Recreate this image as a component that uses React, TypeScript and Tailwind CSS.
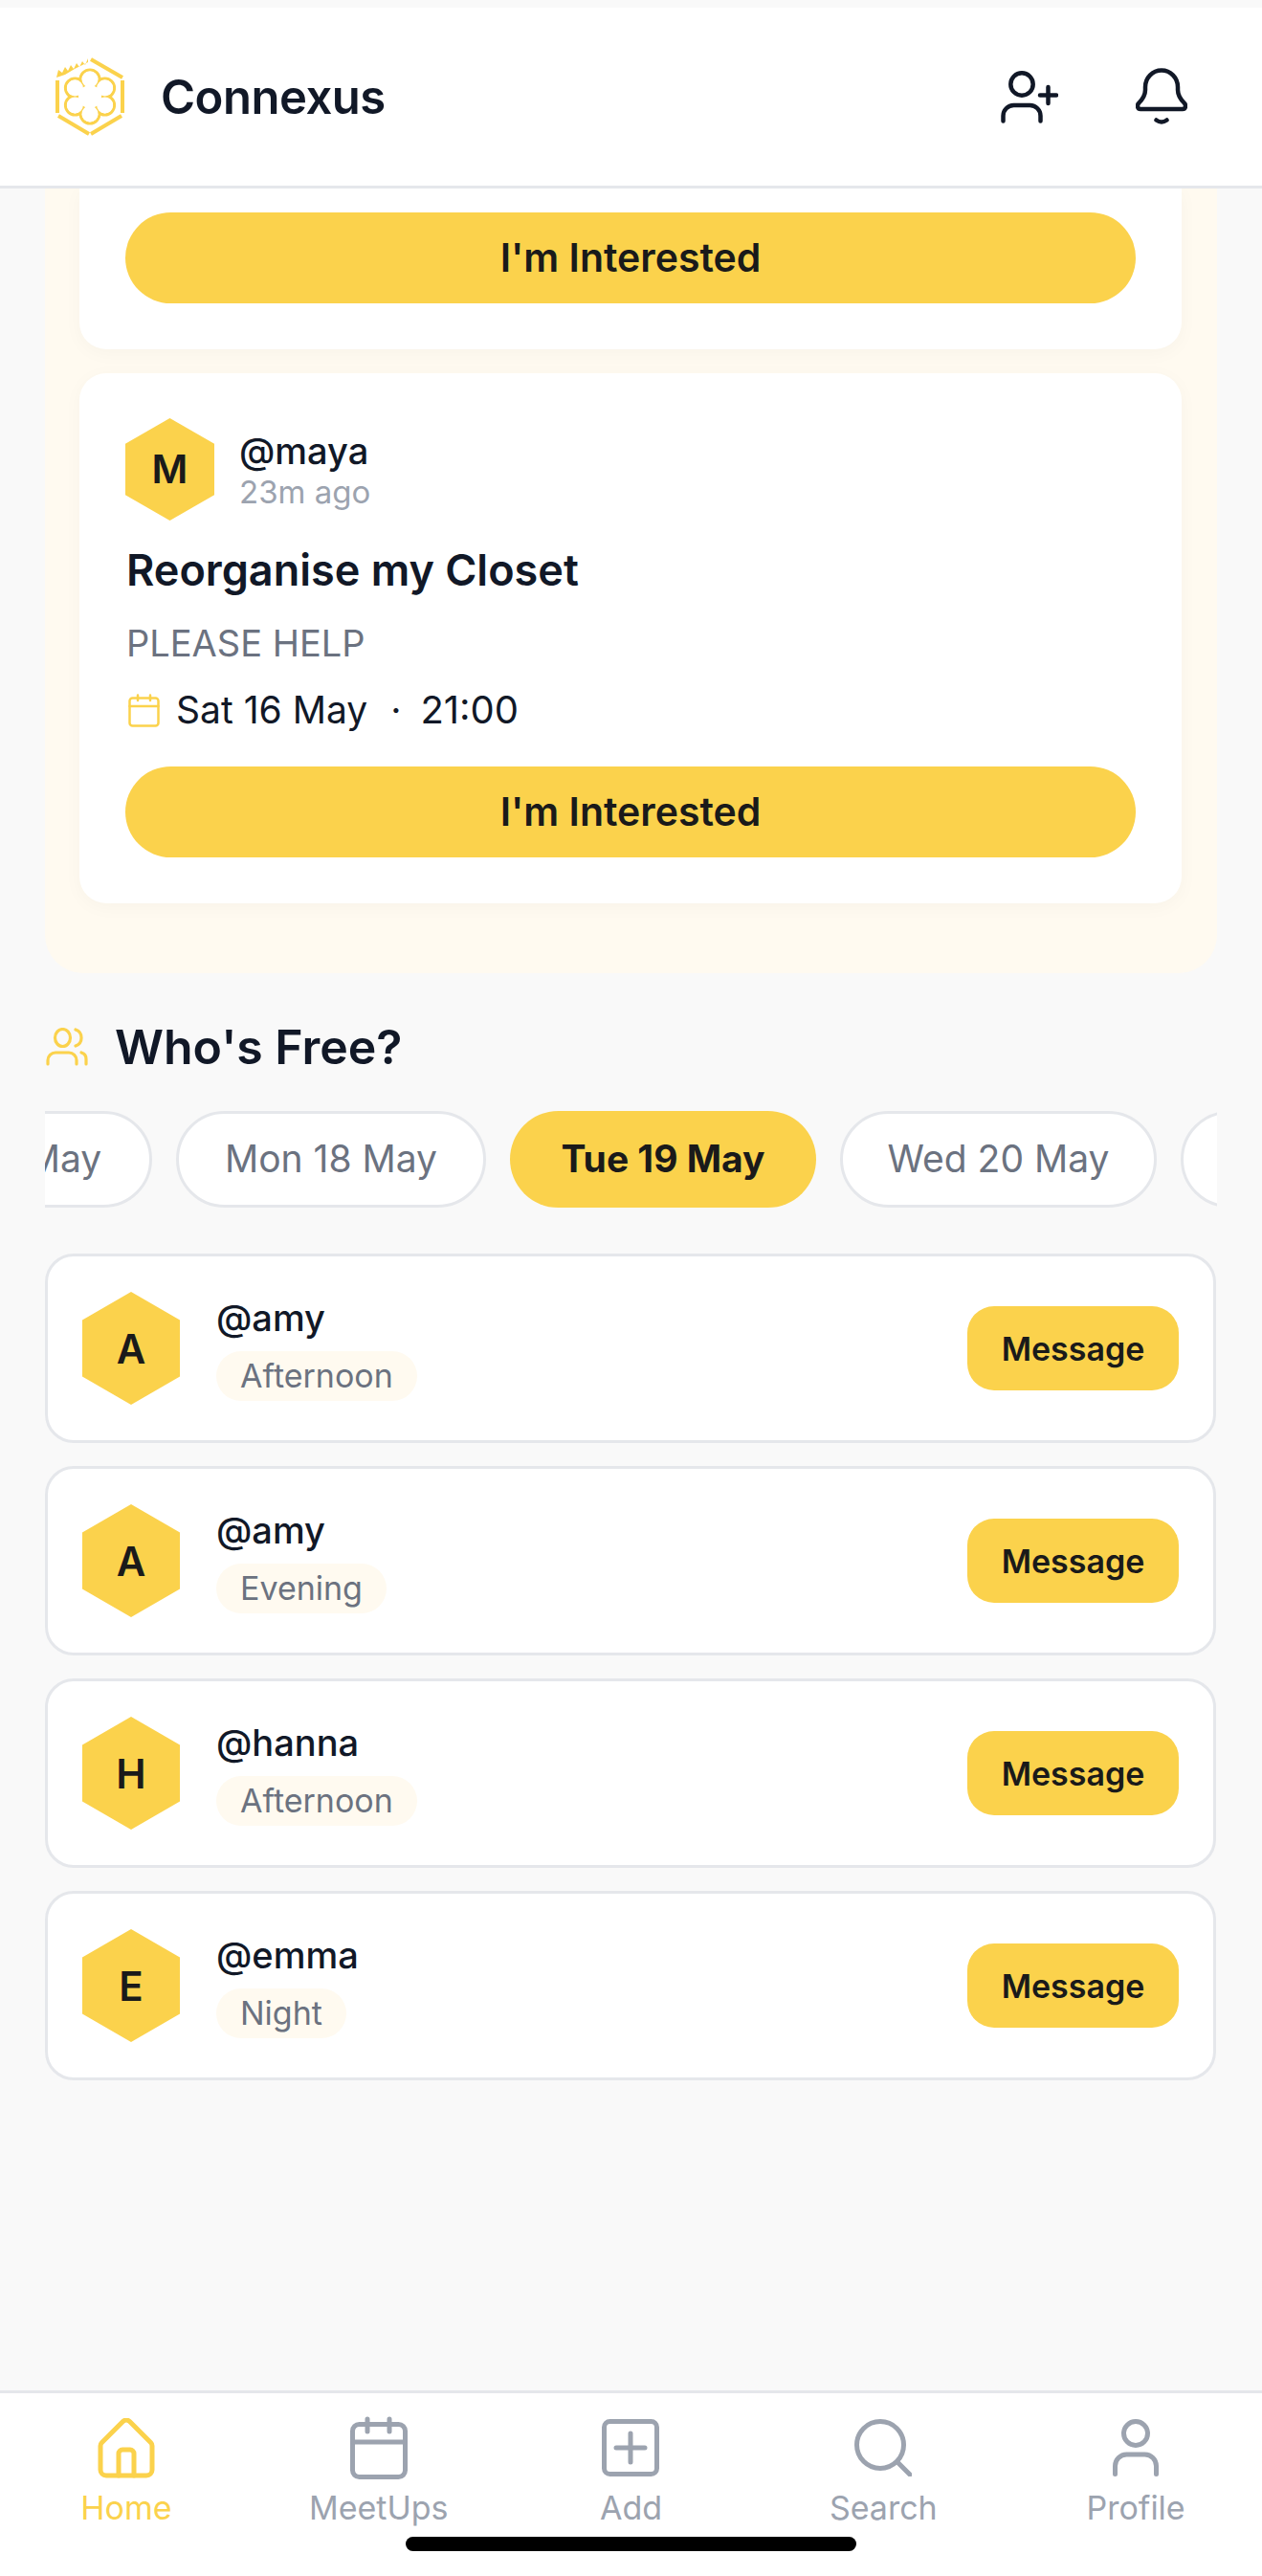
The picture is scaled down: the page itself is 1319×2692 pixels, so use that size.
import React from 'react';

const YELLOW = '#fbd24c';
const GRAY = '#9ca3af';
const DARK = '#111827';

const HEX = 'bg-[#fbd24c] [clip-path:polygon(50%_0,100%_25%,100%_75%,50%_100%,0_75%,0_25%)] flex items-center justify-center shrink-0 font-semibold text-[#1a1a1a]';

const PETALS = [
  [36, 23],
  [51.6, 32],
  [51.6, 50],
  [36, 59],
  [20.4, 50],
  [20.4, 32],
];

function Logo() {
  return (
    <svg width="72" height="82" viewBox="0 0 72 82" fill="none" className="shrink-0">
      <g stroke={YELLOW} strokeWidth="4">
        <path d="M37 2 L70 21" />
        <path d="M70 24 V58" />
        <path d="M69 61 L37 80" />
        <path d="M35 80 L3 61" />
        <path d="M2 58 V24" />
      </g>
      <path d="M34 1 L31 8 L28 4 L25 10 L22 6 L19 12 L16 8 L13 14 L10 10 L7 16 L3 13 L1 21 L10 18 L20 12 L34 5 Z" fill={YELLOW} />
      {PETALS.map(([cx, cy]) => (
        <circle key={`o${cx}${cy}`} cx={cx} cy={cy} r="10" stroke={YELLOW} strokeWidth="3" />
      ))}
      {PETALS.map(([cx, cy]) => (
        <circle key={`f${cx}${cy}`} cx={cx} cy={cy} r="8.5" fill="#fff" />
      ))}
      <circle cx="36" cy="41" r="12" fill="#fff" />
    </svg>
  );
}

function UserPlusIcon() {
  return (
    <svg width="60" height="55" viewBox="0 0 60 55" fill="none" stroke={DARK} strokeWidth="4.5" strokeLinecap="round">
      <circle cx="22" cy="14" r="11.7" />
      <path d="M2.5 52.5 V47 a11 11 0 0 1 11-11 h17 a11 11 0 0 1 11 11 v5.5" />
      <path d="M49.5 17 V34 M41 25.5 H58" />
    </svg>
  );
}

function BellIcon() {
  return (
    <svg width="54" height="60" viewBox="0 0 54 60" fill="none" stroke={DARK} strokeWidth="4.5" strokeLinecap="round" strokeLinejoin="round">
      <path d="M10 20 a17 17.5 0 0 1 34 0 v3 c0 6 3 10 7 14 c2 2.5 1 6 -2 6 H5 c-3 0 -4 -3.5 -2 -6 c4 -4 7 -8 7 -14 z" />
      <path d="M21.5 54.5 q5.5 4 11 0" />
    </svg>
  );
}

function SmallCalendar() {
  return (
    <svg width="33" height="35" viewBox="0 0 33 35" fill="none" stroke={YELLOW} strokeWidth="2.5" strokeLinecap="round" className="shrink-0">
      <rect x="1.5" y="4.5" width="30" height="29" rx="3" />
      <path d="M1.5 13 H31.5 M10 1.5 V7 M23 1.5 V7" />
    </svg>
  );
}

function UsersIcon() {
  return (
    <svg width="44" height="40" viewBox="0 0 44 40" fill="none" stroke={YELLOW} strokeWidth="3.2" strokeLinecap="round" className="shrink-0 ml-px">
      <ellipse cx="17.5" cy="10.5" rx="8" ry="9" />
      <path d="M31 2 a9 9 0 0 1 0 17" />
      <path d="M2 38 v-4 a8 8 0 0 1 8-8 h14 a8 8 0 0 1 8 8 v4" />
      <path d="M37 26 a7 7 0 0 1 5 7 v5" />
    </svg>
  );
}

function HomeIcon() {
  return (
    <svg width="60" height="63" viewBox="0 0 60 63" fill="none" stroke={YELLOW} strokeWidth="5" strokeLinecap="round" strokeLinejoin="round">
      <path d="M3 29 a5 5 0 0 1 1.5-3.5 L26.5 3.5 a5 5 0 0 1 7 0 L55.5 25.5 a5 5 0 0 1 1.5 3.5 V54 a6 6 0 0 1-6 6 H9 a6 6 0 0 1-6-6 z" />
      <path d="M22 60 V37 a4 4 0 0 1 4-4 h8 a4 4 0 0 1 4 4 V60" />
    </svg>
  );
}

function CalendarIcon() {
  return (
    <svg width="60" height="66" viewBox="0 0 60 66" fill="none" stroke={GRAY} strokeWidth="5" strokeLinecap="round">
      <rect x="2.5" y="8.5" width="55" height="55" rx="7" />
      <path d="M2.5 27 H57.5 M18 3 V16 M41 3 V16" />
    </svg>
  );
}

function AddIcon() {
  return (
    <svg width="60" height="60" viewBox="0 0 60 60" fill="none" stroke={GRAY} strokeWidth="5" strokeLinecap="round">
      <rect x="2.5" y="2.5" width="55" height="55" rx="6" />
      <path d="M30 15 V45 M15 30 H45" />
    </svg>
  );
}

function SearchIcon() {
  return (
    <svg width="60" height="60" viewBox="0 0 60 60" fill="none" stroke={GRAY} strokeWidth="5" strokeLinecap="round">
      <circle cx="27" cy="27" r="24.5" />
      <path d="M45 45 L58 58" />
    </svg>
  );
}

function ProfileIcon() {
  return (
    <svg width="48" height="60" viewBox="0 0 48 60" fill="none" stroke={GRAY} strokeWidth="5" strokeLinecap="round">
      <circle cx="24" cy="15" r="12.5" />
      <path d="M2.5 57.5 V49 a12 12 0 0 1 12-12 h19 a12 12 0 0 1 12 12 v8.5" />
    </svg>
  );
}

const PEOPLE = [
  { letter: 'A', name: '@amy', slot: 'Afternoon' },
  { letter: 'A', name: '@amy', slot: 'Evening' },
  { letter: 'H', name: '@hanna', slot: 'Afternoon' },
  { letter: 'E', name: '@emma', slot: 'Night' },
];

const NAV = [
  { label: 'Home', icon: <HomeIcon />, active: true },
  { label: 'MeetUps', icon: <CalendarIcon /> },
  { label: 'Add', icon: <AddIcon /> },
  { label: 'Search', icon: <SearchIcon /> },
  { label: 'Profile', icon: <ProfileIcon /> },
];

function InterestedButton() {
  return (
    <button className="w-full h-[95px] rounded-full bg-[#fbd24c] text-[#1a1a1a] text-[41px] font-semibold">
      I'm Interested
    </button>
  );
}

function Pill({ children, className = '' }: { children?: React.ReactNode; className?: string }) {
  return (
    <div className={`h-[101px] rounded-full flex items-center justify-center shrink-0 text-[39px] ${className}`}>
      {children}
    </div>
  );
}

export default function App() {
  return (
    <div className="relative h-[2692px] w-[1319px] bg-[#f9f9f9] flex flex-col overflow-hidden font-['Inter',sans-serif]">
      <header className="mt-2 h-[189px] shrink-0 bg-white border-b-[3px] border-[#e5e7eb] flex items-center pl-[58px] pr-[78px]">
        <Logo />
        <span className="ml-[38px] mt-[2px] text-[49px] font-semibold text-[#111827] tracking-[-0.01em]">Connexus</span>
        <div className="ml-auto flex items-center gap-[81px]">
          <UserPlusIcon />
          <BellIcon />
        </div>
      </header>

      <main className="flex-1 px-[47px] overflow-hidden">
        <section className="bg-[#fffaf0] rounded-b-[40px] pl-[36px] pr-[37px] pb-[73px] flex flex-col gap-[25px]">
          <div className="bg-white rounded-b-[28px] px-[48px] pt-[25px] pb-[48px] shadow-[0_4px_20px_rgba(0,0,0,0.03)]">
            <InterestedButton />
          </div>
          <div className="bg-white rounded-[28px] px-[48px] pt-[47px] pb-[48px] shadow-[0_4px_20px_rgba(0,0,0,0.03)]">
            <div className="flex items-center gap-[26px]">
              <div className={`${HEX} w-[93px] h-[107px] text-[41px]`}>M</div>
              <div className="flex flex-col gap-[3px]">
                <span className="text-[38px] leading-[44px] font-medium text-[#111827]">@maya</span>
                <span className="text-[33px] leading-[36px] text-[#9ca3af]">23m ago</span>
              </div>
            </div>
            <h3 className="mt-[26px] text-[45px] leading-[52px] font-semibold text-[#111827] ml-px">Reorganise my Closet</h3>
            <p className="mt-[28px] text-[38px] leading-[44px] text-[#6b7280] ml-px">PLEASE HELP</p>
            <div className="mt-[26px] flex items-center h-[44px] ml-[3px] text-[39px] text-[#111827]">
              <SmallCalendar />
              <span className="ml-[17px]">Sat 16 May</span>
              <span className="ml-[24px]">·</span>
              <span className="ml-[20px] text-[40px]">21:00</span>
            </div>
            <div className="mt-[37px]">
              <InterestedButton />
            </div>
          </div>
        </section>

        <div className="mt-[57px] flex items-center gap-[28px] h-[40px]">
          <UsersIcon />
          <h2 className="text-[50px] font-semibold text-[#111827]">Who's Free?</h2>
        </div>

        <div className="mt-[47px] flex gap-[25px] overflow-hidden">
          <Pill className="bg-white border-[3px] border-[#e5e7eb] text-[#6b7280] w-[315px] -ml-[203px]">Sun 17 May</Pill>
          <Pill className="bg-white border-[3px] border-[#e5e7eb] text-[#6b7280] w-[324px]">Mon 18 May</Pill>
          <Pill className="bg-[#fbd24c] text-[#1a1a1a] font-bold w-[320px]">Tue 19 May</Pill>
          <Pill className="bg-white border-[3px] border-[#e5e7eb] text-[#6b7280] w-[331px]">Wed 20 May</Pill>
          <Pill className="bg-white border-[3px] border-[#e5e7eb] w-[323px]" />
        </div>

        <div className="mt-[48px] mr-px flex flex-col gap-[24px]">
          {PEOPLE.map((p, i) => (
            <div key={i} className="h-[198px] bg-white border-[3px] border-[#e5e7eb] rounded-[30px] flex items-center pl-[36px] pr-[36px]">
              <div className={`${HEX} w-[102px] h-[118px] text-[42px]`}>{p.letter}</div>
              <div className="ml-[38px] flex flex-col items-start gap-[13px]">
                <span className="text-[38px] leading-[44px] font-medium text-[#111827]">{p.name}</span>
                <span className="h-[52px] px-[25px] rounded-full bg-[#fffaf0] flex items-center text-[34px] text-[#6b7280]">{p.slot}</span>
              </div>
              <button className="ml-auto w-[221px] h-[88px] rounded-[28px] bg-[#fbd24c] text-[#1a1a1a] text-[34px] font-semibold">
                Message
              </button>
            </div>
          ))}
        </div>
      </main>

      <nav className="h-[194px] shrink-0 bg-white border-t-[3px] border-[#e5e7eb] grid grid-cols-5 pt-[24px]">
        {NAV.map((item) => (
          <div key={item.label} className="flex flex-col items-center">
            <div className="h-[66px] flex items-center justify-center">{item.icon}</div>
            <span className={`mt-[10px] text-[34px] leading-[40px] ${item.active ? 'text-[#fbd24c]' : 'text-[#9ca3af]'}`}>
              {item.label}
            </span>
          </div>
        ))}
      </nav>

      <div className="absolute left-[424px] top-[2651px] w-[471px] h-[15px] rounded-full bg-black" />
    </div>
  );
}
